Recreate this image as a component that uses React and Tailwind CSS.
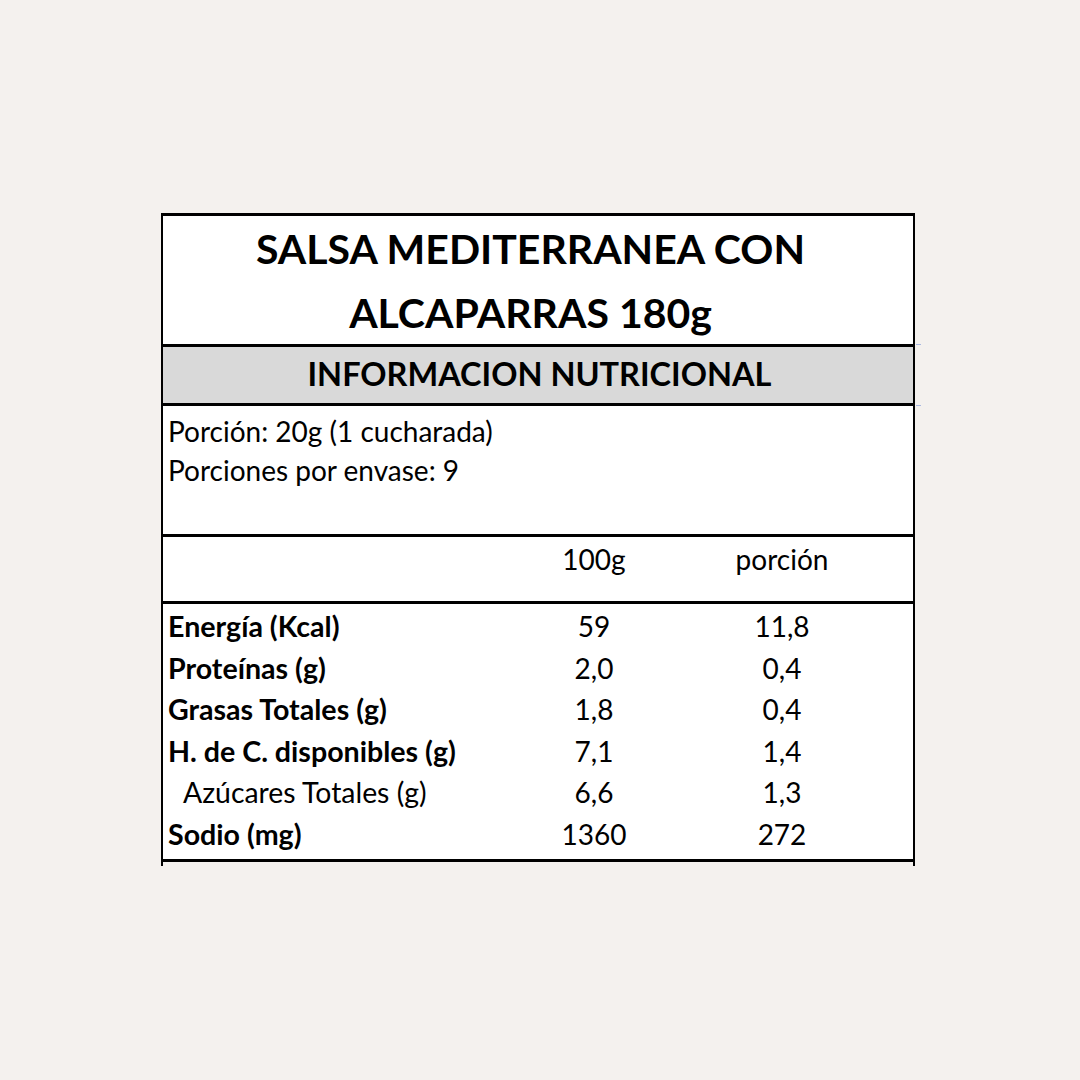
export default function App() {
  const rows = [
    { label: "Energía (Kcal)", a: "59", b: "11,8", bold: true },
    { label: "Proteínas (g)", a: "2,0", b: "0,4", bold: true },
    { label: "Grasas Totales (g)", a: "1,8", b: "0,4", bold: true },
    { label: "H. de C. disponibles (g)", a: "7,1", b: "1,4", bold: true },
    { label: "Azúcares Totales (g)", a: "6,6", b: "1,3", bold: false },
    { label: "Sodio (mg)", a: "1360", b: "272", bold: true },
  ];
  return (
    <div className="w-[1080px] h-[1080px] bg-[#f4f1ee] pt-[213px] pl-[161px] text-black font-['Lato',sans-serif]">
      <div className="w-[754px] border-x-2 border-t-[3px] border-black bg-white flex flex-col">
        <div className="h-[128px] pt-[1px] pr-[15px] flex flex-col items-center font-bold text-[41px] leading-[64px]">
          <div>SALSA MEDITERRANEA CON</div>
          <div>ALCAPARRAS 180g</div>
        </div>
        <div className="relative h-[62px] border-y-[3px] border-black bg-[#d9d9d9] flex items-center justify-center pb-[1px] pl-[3px] font-bold text-[32.5px]">
          INFORMACION NUTRICIONAL
          <div className="absolute right-[-8px] top-[-3px] w-[5px] h-[1px] bg-[#a9b8e0]" />
          <div className="absolute right-[-8px] bottom-[-3px] w-[5px] h-[1px] bg-[#a9b8e0]" />
        </div>
        <div className="h-[131px] border-b-[3px] border-black pt-[6px] pl-[5px] text-[28px] leading-[39px]">
          <div>Porción: 20g (1 cucharada)</div>
          <div>Porciones por envase: 9</div>
        </div>
        <div className="h-[67px] border-b-[3px] border-black grid grid-cols-[371px_120px_1fr] items-start pt-[5px] text-[28px] leading-[34px]">
          <div />
          <div className="text-center">100g</div>
          <div className="text-center pr-[3px]">porción</div>
        </div>
        <div className="h-[258px] border-b-[3px] border-black pt-[1px] text-[28px]">
          {rows.map((r) => (
            <div key={r.label} className="grid grid-cols-[371px_120px_1fr] h-[41.5px] items-center">
              <div className={r.bold ? "pl-[5px] font-bold text-[28.6px]" : "pl-[20px] text-[28.4px]"}>{r.label}</div>
              <div className="text-center">{r.a}</div>
              <div className="text-center pr-[3px]">{r.b}</div>
            </div>
          ))}
        </div>
        <div className="h-[4px] bg-[#f4f1ee]" />
      </div>
    </div>
  );
}
